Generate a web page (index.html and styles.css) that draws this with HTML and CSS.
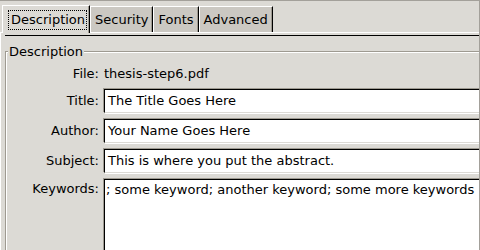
FILE: index.html
```html
<!DOCTYPE html>
<html>
<head>
<meta charset="UTF-8">
<title>Document Properties</title>
<link rel="stylesheet" href="styles.css">
</head>
<body>
<div class="window">
  <div class="tabs">
    <div class="tab active"><span class="focus">Description</span></div>
    <div class="tab">Security</div>
    <div class="tab">Fonts</div>
    <div class="tab">Advanced</div>
  </div>
  <div class="page">
    <div class="inner">
      <div class="group">
        <span class="legend">Description</span>
        <div class="form">
          <div class="label">File:</div>
          <div class="value">thesis-step6.pdf</div>
          <div class="label">Title:</div>
          <div class="entry">The Title Goes Here</div>
          <div class="label">Author:</div>
          <div class="entry">Your Name Goes Here</div>
          <div class="label">Subject:</div>
          <div class="entry">This is where you put the abstract.</div>
          <div class="label top">Keywords:</div>
          <div class="entry area">; some keyword; another keyword; some more keywords</div>
        </div>
      </div>
    </div>
  </div>
</div>
</body>
</html>
```

FILE: styles.css
```css
*{
  margin:0;
  padding:0;
  box-sizing:border-box;
}

body{
  background:#dcdad5;
  font-family:"DejaVu Sans", sans-serif;
  font-size:13px;
  color:#000;
}

.window{
  width:480px;
  height:250px;
  overflow:hidden;
  border-top:1px solid #a3a09a;
  border-right:1px solid #a3a09a;
}

/* tab strip */
.tabs{
  display:flex;
  align-items:flex-end;
  height:31px;
  padding-left:2px;
}

.tab{
  height:26px;
  padding:4px 4px 0 4px;
  background:#cbc8c2;
  border-left:1px solid #fff;
  border-top:1px solid #fff;
  border-right:1px solid #000;
  box-shadow:inset -1px 0 #9e9a91;
  line-height:18px;
}

.tab.active{
  height:28px;
  padding:5px 3px 0 6px;
  background:#dcdad5;
  margin-bottom:-1px;
  position:relative;
}

.focus{
  display:block;
  padding:0 1px 0 2px;
  outline:1px dotted #000;
  line-height:18px;
}

/* notebook page */
.page{
  border-top:1px solid #fff;
  border-left:1px solid #fff;
  padding:2px 0 0 4px;
  height:218px;
}

.inner{
  border-top:1px solid #000;
  padding:15px 0 0 0;
  height:100%;
}

.group{
  position:relative;
  height:220px;
  border-top:1px solid #9e9a91;
  border-left:1px solid #9e9a91;
  box-shadow:inset 1px 1px #fff;
}

.legend{
  position:absolute;
  top:-8px;
  left:2px;
  padding:0 1px;
  background:#dcdad5;
  line-height:15px;
}

.form{
  display:grid;
  grid-template-columns:93px 500px;
  grid-template-rows:19px 24px 24px 24px 80px;
  column-gap:5px;
  row-gap:6px;
  padding-top:12px;
}

.label{
  text-align:right;
  line-height:24px;
}

.form .label:first-child{
  line-height:19px;
}

.value{
  line-height:19px;
}

.label.top{
  line-height:16px;
  padding-top:2px;
}

.entry{
  background:#fff;
  border:1px solid;
  border-color:#000 #dcdad5 #dcdad5 #000;
  box-shadow:-1px -1px 0 #9e9a91, 1px 1px 0 #fff;
  padding:0 3px;
  line-height:22px;
  white-space:nowrap;
}

.entry.area{
  line-height:16px;
  padding:2px 1px;
}
```
